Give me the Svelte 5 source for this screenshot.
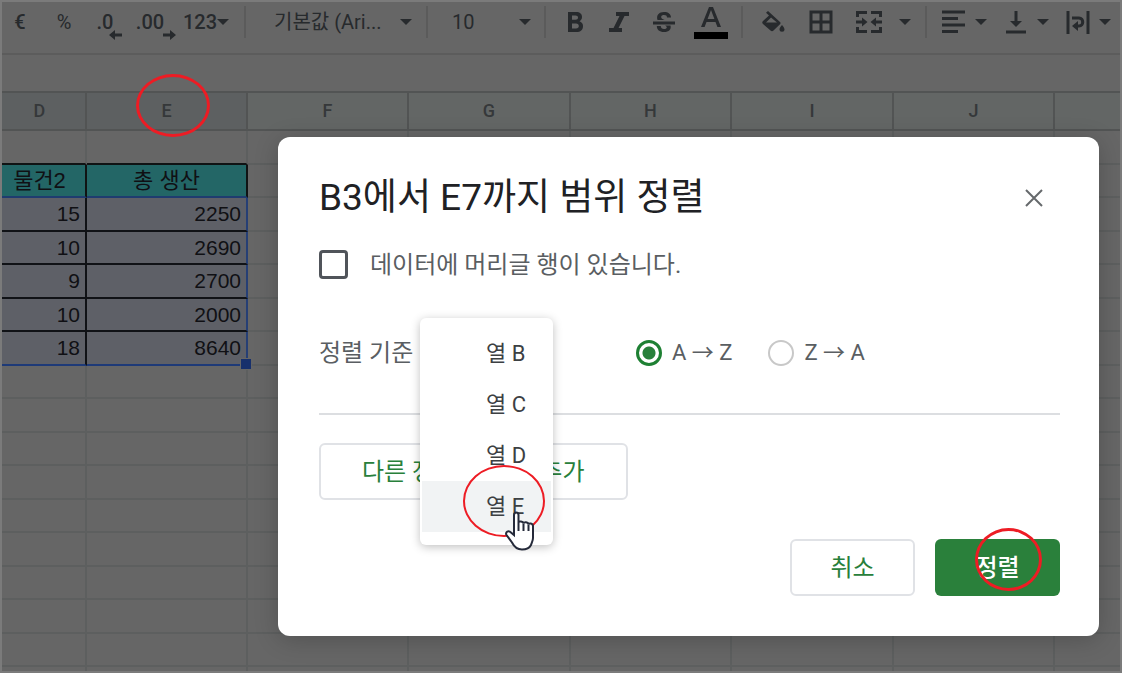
<script>
    const columns = ["D", "E", "F", "G", "H", "I", "J", ""];
    const data = [
        [],
        ["물건2", "총 생산"],
        [15, 2250],
        [10, 2690],
        [9, 2700],
        [10, 2000],
        [18, 8640],
    ];
    const rows = Array.from({length: 17}, (_, i) => data[i] || []);
    const options = ["B", "C", "D", "E"];

    let hasHeader = false;
    let order = "asc";
    let active = "E";

    function cellClass(row, col) {
        if (col > 1 || row < 1 || row > 6) return "";
        let name = row === 1 ? "title" : "value";
        if (col === 1) name += " last";
        if (row === 6) name += " bottom";
        return name;
    }
</script>

{#snippet caret()}
    <svg class="caret" width="12" height="6" viewBox="0 0 12 6"><path d="M0 0h12L6 6z"/></svg>
{/snippet}

<div class="app">
    <div class="toolbar">
        <button>€</button>
        <button class="percent">%</button>
        <button class="decimal" aria-label="소수점 이하 자릿수 감소">.0
            <svg width="13" height="10" viewBox="0 0 13 10"><path d="M0 5l6-5v3.500h7v3H6V10z"/></svg>
        </button>
        <button class="decimal" aria-label="소수점 이하 자릿수 증가">.00
            <svg width="13" height="10" viewBox="0 0 13 10"><path d="M13 5L7 0v3.500H0v3h7V10z"/></svg>
        </button>
        <button class="format">123{@render caret()}</button>
        <i class="divider"></i>
        <label class="drop">
            <select aria-label="글꼴"><option>기본값 (Ari...</option></select>
            {@render caret()}
        </label>
        <i class="divider"></i>
        <label class="drop size">
            <select aria-label="글꼴 크기"><option>10</option></select>
            {@render caret()}
        </label>
        <i class="divider"></i>
        <button aria-label="굵게">
            <svg width="18" height="20" viewBox="0 0 18 20"><path fill-rule="evenodd" d="M2 0h8c4 0 6 2 6 5 0 2-1 3.500-2.500 4.300C15.500 10 17 11.700 17 14c0 4-2.600 6-6.500 6H2zM6 3.500v4.300h3.500c1.600 0 2.500-.8 2.500-2.200s-.9-2.100-2.500-2.100zM6 11.500v5h4c1.900 0 2.800-1 2.800-2.500s-.9-2.500-2.800-2.500z"/></svg>
        </button>
        <button aria-label="기울임꼴">
            <svg width="20" height="20" viewBox="0 0 20 20"><path d="M7 0h13v4h-4.500L9.500 16H13v4H0v-4h4.500l6-12H7z"/></svg>
        </button>
        <button aria-label="취소선">
            <svg width="22" height="20" viewBox="0 0 22 20"><path d="M0 9.500h22v3H0zM4.500 8C3 3 6 0 11 0c4.200 0 7 2 7 5.500h-4C14 3.800 13 3 11 3 8 3 7.200 5.500 9.500 7l2 1zM12 13.500h5.500C18.500 17.500 16 20 11 20c-4.500 0-7.200-2.200-7.200-6h4c0 2 1.200 3 3.200 3 3 0 4-2 1-3.500z"/></svg>
        </button>
        <button aria-label="텍스트 색상">
            <svg width="34" height="34" viewBox="0 0 34 34"><path fill-rule="evenodd" d="M15 2h4l8 20h-3.600l-1.900-5h-9l-1.900 5H7zM13.600 14h6.800L17 5z"/><path class="ink" d="M0 27h34v7H0z"/></svg>
        </button>
        <i class="divider"></i>
        <button aria-label="채우기 색상">
            <svg width="24" height="22" viewBox="0 0 24 22"><path fill-rule="evenodd" d="M7 0l12 11c.7.700.7 1.500 0 2.200l-6.500 6.300c-1 1-2 1-3 0L2 13c-1-1-1-2 0-3l6-5.500-3-2.800zM10 6.500L5 11.500h11zM21 14s2.500 2.700 2.500 4.300a2.500 2.500 0 0 1-5 0C18.500 16.700 21 14 21 14z"/></svg>
        </button>
        <button aria-label="테두리">
            <svg width="24" height="24" viewBox="0 0 24 24"><path class="line" d="M2 2h20v20H2zM12 2v20M2 12h20"/></svg>
        </button>
        <button aria-label="셀 병합">
            <svg width="26" height="24" viewBox="0 0 26 24"><path class="line" d="M1.500 7V2.500H11M15 2.500h9.500V7M1.500 17v4.500H11M15 21.500h9.500V17M0 12h8M26 12h-8"/><path d="M6 7.500l5.500 4.500L6 16.500zM20 7.500L14.500 12l5.500 4.500z"/></svg>
        </button>
        <button aria-label="병합 유형">{@render caret()}</button>
        <i class="divider"></i>
        <button aria-label="가로 맞춤">
            <svg width="24" height="24" viewBox="0 0 24 24"><path class="line" d="M0 2h23M0 8.500h16M0 15h23M0 21.500h16"/></svg>
        </button>
        <button class="more" aria-label="가로 맞춤 메뉴">{@render caret()}</button>
        <button aria-label="세로 맞춤">
            <svg width="20" height="24" viewBox="0 0 20 24"><path class="line" d="M0 22h20M10 1v12"/><path d="M4 11h12l-6 6z"/></svg>
        </button>
        <button class="more" aria-label="세로 맞춤 메뉴">{@render caret()}</button>
        <button aria-label="줄바꿈">
            <svg width="24" height="24" viewBox="0 0 24 24"><path class="line" d="M2 1v23M22 1v23M6 8h7c5 0 5 8 0 8h-2"/><path d="M12 11v10l-6-5z"/></svg>
        </button>
        <button class="more" aria-label="줄바꿈 메뉴">{@render caret()}</button>
    </div>
    <div class="formula"></div>

    <table>
        <colgroup>
            <col class="first"><col><col><col class="wide"><col><col class="wide"><col><col class="rest">
        </colgroup>
        <thead>
            <tr>
                {#each columns as column, i}
                    <th class:picked={i < 2}>
                        {column}
                        {#if column === "E"}<span class="ring head"></span>{/if}
                    </th>
                {/each}
            </tr>
        </thead>
        <tbody>
            {#each rows as row, r}
                <tr>
                    {#each columns as _, c}
                        <td class={cellClass(r, c)}>
                            {row[c] ?? ""}
                            {#if r === 6 && c === 1}<span class="handle"></span>{/if}
                        </td>
                    {/each}
                </tr>
            {/each}
        </tbody>
    </table>

    <div class="overlay">
        <div class="dialog" role="dialog" aria-labelledby="dialog-title">
            <header>
                <h1 id="dialog-title">B3에서 E7까지 범위 정렬</h1>
                <button class="close" aria-label="닫기">
                    <svg width="18" height="18" viewBox="0 0 18 18"><path d="M1 1l16 16M17 1L1 17"/></svg>
                </button>
            </header>

            <label class="check">
                <input type="checkbox" bind:checked={hasHeader}>
                데이터에 머리글 행이 있습니다.
            </label>

            <div class="sort">
                <span class="by">정렬 기준</span>
                <div class="picker">
                    <div class="menu" role="listbox" aria-label="정렬 기준">
                        {#each options as option}
                            <button role="option" aria-selected={active === option} class:active={active === option}
                                    on:mouseenter={() => active = option}>열 {option}</button>
                        {/each}
                        <span class="ring item"></span>
                        <svg class="hand" width="32" height="40" viewBox="0 0 32 40">
                            <path d="M10 24V4c0-3.500 4.500-3.500 4.500 0v8c0-2.500 5-2 5 .8 0-2.400 5-2 5 1 0-2 4.500-1.700 4.500 1.500V27c0 3-1.500 5-2 7-1.500 3-5 4.500-9 4.500-5 0-8-3-10-7L2.500 24C1 21 4.500 19 7 21.500z"/>
                            <path d="M14.500 12v8M19.500 13v7M24.500 14v6"/>
                        </svg>
                    </div>
                </div>
                <label><input type="radio" value="asc" bind:group={order}>A → Z</label>
                <label><input type="radio" value="desc" bind:group={order}>Z → A</label>
            </div>

            <button class="outline add">다른 정렬 기준 열 추가</button>

            <footer>
                <button class="outline">취소</button>
                <button class="primary">정렬<span class="ring go"></span></button>
            </footer>
        </div>
    </div>
</div>

<style>
    :global(body) {
        margin: 0;
    }

    .app {
        position: relative;
        box-sizing: border-box;
        height: 100vh;
        overflow: hidden;
        border: 2px solid #7b7b7b;
        background: #666666;
        font-family: Roboto, "Noto Sans CJK KR", sans-serif;
    }

    button, select {
        font: inherit;
        color: inherit;
        border: none;
        background: none;
        padding: 0;
        margin: 0;
        white-space: nowrap;
    }

    /* toolbar */

    .toolbar {
        display: grid;
        grid-template-columns: 36px 52px 36px 54px 52px 26px 162px 14px 104px 14px 45px 44px 46px 48px 14px 48px 48px 48px 23px 20px 36px 26px 36px 26px 36px 1fr;
        align-items: center;
        height: 40px;
        padding-bottom: 11px;
        border-bottom: 2px solid #5c5c5c;
        color: #272a2d;
        font-size: 20px;
        font-weight: 500;
    }

    .toolbar button {
        position: relative;
        display: flex;
        align-items: center;
        justify-content: center;
        height: 40px;
    }

    .toolbar svg {
        flex: none;
        fill: #272a2d;
    }

    .toolbar .line {
        fill: none;
        stroke: #272a2d;
        stroke-width: 3;
    }

    .toolbar .ink {
        fill: #000000;
    }

    .toolbar .percent {
        font-weight: 400;
    }

    .toolbar .decimal {
        padding-right: 6px;
    }

    .decimal svg {
        position: absolute;
        right: 4px;
        bottom: 2px;
    }

    .toolbar .more {
        justify-content: flex-start;
        padding-left: 3px;
    }

    .divider {
        justify-self: center;
        width: 2px;
        height: 32px;
        background: #5b5b5b;
    }

    .drop {
        display: flex;
        align-items: center;
        justify-content: space-between;
        padding: 0 8px 0 16px;
        font-weight: 400;
    }

    .drop select {
        appearance: none;
        width: 112px;
    }

    .size {
        padding: 0 7px 0 18px;
    }

    .size select {
        width: 40px;
    }

    .formula {
        height: 36px;
        border-bottom: 2px solid #525454;
    }

    /* grid */

    table {
        width: 100%;
        table-layout: fixed;
        border-collapse: separate;
        border-spacing: 0;
        font-family: "Liberation Sans", "Noto Sans CJK KR", sans-serif;
        font-size: 21px;
    }

    col {
        width: 161px;
    }

    col.first {
        width: 85px;
    }

    col.wide {
        width: 162px;
    }

    col.rest {
        width: auto;
    }

    th, td {
        position: relative;
        box-sizing: border-box;
        padding: 0;
        line-height: 28px;
    }

    th {
        height: 38px;
        border-right: 2px solid #525454;
        border-bottom: 2px solid #525454;
        background: #636665;
        color: #35383a;
        font-family: Roboto, sans-serif;
        font-size: 18px;
        font-weight: 500;
    }

    th.picked {
        background: #5d6061;
    }

    td {
        height: 34px;
        border-right: 2px solid #5d5f5f;
        border-bottom: 2px solid #5d5f5f;
        color: #101014;
    }

    tr:nth-child(even) td {
        height: 33px;
    }

    th:first-child, td.title:first-child {
        padding-right: 8px;
    }

    th:last-child, td:last-child {
        border-right: none;
    }

    tbody tr:first-child td:nth-child(-n+2) {
        border-bottom-color: #101314;
    }

    td.title {
        border-right-color: #101314;
        border-bottom-color: #1f3c70;
        background: #236666;
        font-size: 22px;
        text-align: center;
    }

    td.value {
        padding-right: 5px;
        border-right-color: #101216;
        border-bottom-color: #101216;
        background: #5e6067;
        text-align: right;
    }

    td.value.last {
        border-right-color: #263f75;
    }

    td.value.bottom {
        border-bottom-color: #1e3a78;
    }

    .handle {
        position: absolute;
        right: -6px;
        bottom: -6px;
        z-index: 1;
        width: 10px;
        height: 10px;
        border: 1px solid #666666;
        background: #17306c;
    }

    /* dialog */

    .overlay {
        position: absolute;
        inset: 0;
        padding: 135px 21px 35px 276px;
    }

    .dialog {
        box-sizing: border-box;
        padding: 33px 39px 40px 41px;
        border-radius: 12px;
        background: #ffffff;
        box-shadow: 0 4px 24px rgba(0, 0, 0, 0.2);
        color: #5a5e62;
        font-size: 24px;
        line-height: 28px;
    }

    header {
        display: flex;
        align-items: center;
        justify-content: space-between;
        height: 56px;
        padding-right: 17px;
    }

    h1 {
        margin: 0;
        color: #202124;
        font-size: 37px;
        font-weight: 400;
        line-height: 56px;
    }

    .close {
        display: flex;
    }

    .close path {
        stroke: #66696c;
        stroke-width: 2;
    }

    .check {
        display: flex;
        align-items: center;
        gap: 22px;
        margin-top: 24px;
    }

    input {
        appearance: none;
        flex: none;
        box-sizing: border-box;
        margin: 0;
    }

    input[type="checkbox"] {
        width: 29px;
        height: 29px;
        border: 3px solid #50545a;
        border-radius: 4px;
    }

    input[type="radio"] {
        width: 26px;
        height: 26px;
        border: 2px solid #c8c8c8;
        border-radius: 50%;
    }

    input[type="radio"]:checked {
        border: 3px solid #1e8033;
        background: radial-gradient(circle, #28803b 6px, transparent 7px);
    }

    .sort {
        display: flex;
        align-items: center;
        height: 56px;
        margin-top: 46px;
        padding-bottom: 32px;
        border-bottom: 2px solid #dcdee1;
    }

    .by {
        width: 101px;
        white-space: nowrap;
    }

    .picker {
        position: relative;
        align-self: stretch;
        width: 133px;
        margin-right: 83px;
    }

    .sort label {
        display: flex;
        align-items: center;
        gap: 10px;
        margin-right: 36px;
        font-size: 22px;
        white-space: nowrap;
    }

    .menu {
        position: absolute;
        top: -7px;
        left: 0;
        z-index: 1;
        display: flex;
        flex-direction: column;
        box-sizing: border-box;
        width: 133px;
        padding: 10px 2px 13px;
        border-radius: 6px;
        background: #ffffff;
        box-shadow: 0 2px 10px rgba(0, 0, 0, 0.25);
        color: #3c4043;
        font-size: 22px;
    }

    .menu button {
        height: 51px;
        padding-left: 64px;
        text-align: left;
    }

    .menu .active {
        background: #f1f3f4;
    }

    .hand {
        position: absolute;
        top: 193px;
        left: 84px;
        fill: #ffffff;
        stroke: #252a3a;
        stroke-width: 2;
    }

    .outline, .primary {
        box-sizing: border-box;
        height: 57px;
        min-width: 125px;
        border-radius: 6px;
    }

    .outline {
        border: 2px solid #e0e2e6;
        color: #28803b;
    }

    .add {
        display: block;
        margin-top: 28px;
        padding: 0 41px;
    }

    footer {
        display: flex;
        justify-content: flex-end;
        gap: 20px;
        margin-top: 39px;
    }

    .primary {
        position: relative;
        background: #2a803b;
        color: #ffffff;
        font-weight: 500;
    }

    /* red marks */

    .ring {
        position: absolute;
        box-sizing: border-box;
        border: 3px solid #ed1c24;
        border-radius: 50%;
        pointer-events: none;
    }

    .head {
        top: -19px;
        left: 49px;
        width: 74px;
        height: 63px;
    }

    .item {
        top: 147px;
        left: 43px;
        width: 82px;
        height: 72px;
        border-width: 2px;
    }

    .go {
        top: -11px;
        left: 40px;
        width: 67px;
        height: 63px;
    }
</style>
